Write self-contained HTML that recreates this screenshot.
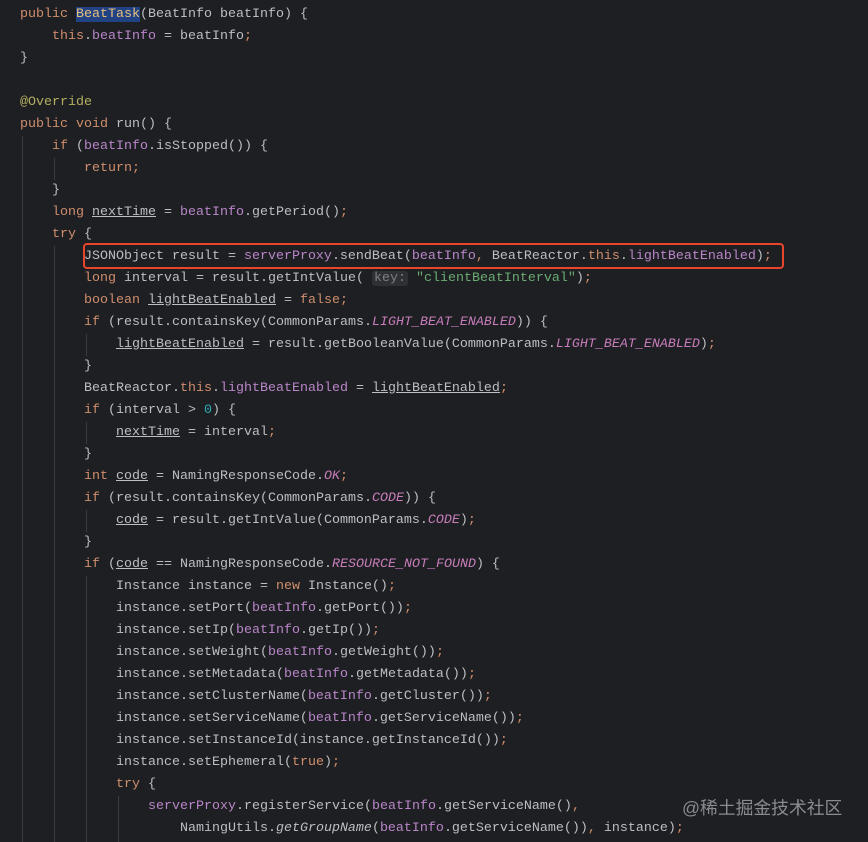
<!DOCTYPE html><html><head><meta charset="utf-8"><style>
body{margin:0;background:#1e1f22;width:868px;height:842px;overflow:hidden;position:relative}
pre{margin:0;position:absolute;left:20px;top:4px;font:13.33px/22px "Liberation Mono","DejaVu Sans Mono",monospace;color:#bcbec4;white-space:pre}
.k{color:#cf8e6d}.f{color:#b986c9}.s{color:#6aab73}.a{color:#b3ae60}.n{color:#2aacb8}.c{color:#c77dbb;font-style:italic}.i{font-style:italic}.u{text-decoration:underline}
.sel{background:#214283;color:#e8c07c}
.h{background:#2f3033;color:#7a7e85;border-radius:3px;padding:0 2px}
.box{position:absolute;left:83px;top:243px;width:697px;height:22px;border:2px solid #e8452c;border-radius:4px}
.g{position:absolute;width:1px;background:#393b40}
.wm{position:absolute;left:682px;top:794px;font:17.8px "Liberation Sans","Noto Sans CJK SC",sans-serif;color:#8a8b8e}
</style></head><body>
<div class="g" style="left:22px;top:136px;height:706px"></div>
<div class="g" style="left:54px;top:158px;height:22px"></div>
<div class="g" style="left:54px;top:246px;height:596px"></div>
<div class="g" style="left:86px;top:334px;height:22px"></div>
<div class="g" style="left:86px;top:422px;height:22px"></div>
<div class="g" style="left:86px;top:510px;height:22px"></div>
<div class="g" style="left:86px;top:576px;height:266px"></div>
<div class="g" style="left:118px;top:796px;height:46px"></div>
<pre><span class="k">public</span> <span class="sel">BeatTask</span>(BeatInfo beatInfo) {
    <span class="k">this</span>.<span class="f">beatInfo</span> = beatInfo<span class="k">;</span>
}

<span class="a">@Override</span>
<span class="k">public void</span> run() {
    <span class="k">if</span> (<span class="f">beatInfo</span>.isStopped()) {
        <span class="k">return;</span>
    }
    <span class="k">long</span> <span class="u">nextTime</span> = <span class="f">beatInfo</span>.getPeriod()<span class="k">;</span>
    <span class="k">try</span> {
        JSONObject result = <span class="f">serverProxy</span>.sendBeat(<span class="f">beatInfo</span><span class="k">,</span> BeatReactor.<span class="k">this</span>.<span class="f">lightBeatEnabled</span>)<span class="k">;</span>
        <span class="k">long</span> interval = result.getIntValue( <span class="h">key:</span> <span class="s">"clientBeatInterval"</span>)<span class="k">;</span>
        <span class="k">boolean</span> <span class="u">lightBeatEnabled</span> = <span class="k">false;</span>
        <span class="k">if</span> (result.containsKey(CommonParams.<span class="c">LIGHT_BEAT_ENABLED</span>)) {
            <span class="u">lightBeatEnabled</span> = result.getBooleanValue(CommonParams.<span class="c">LIGHT_BEAT_ENABLED</span>)<span class="k">;</span>
        }
        BeatReactor.<span class="k">this</span>.<span class="f">lightBeatEnabled</span> = <span class="u">lightBeatEnabled</span><span class="k">;</span>
        <span class="k">if</span> (interval &gt; <span class="n">0</span>) {
            <span class="u">nextTime</span> = interval<span class="k">;</span>
        }
        <span class="k">int</span> <span class="u">code</span> = NamingResponseCode.<span class="c">OK</span><span class="k">;</span>
        <span class="k">if</span> (result.containsKey(CommonParams.<span class="c">CODE</span>)) {
            <span class="u">code</span> = result.getIntValue(CommonParams.<span class="c">CODE</span>)<span class="k">;</span>
        }
        <span class="k">if</span> (<span class="u">code</span> == NamingResponseCode.<span class="c">RESOURCE_NOT_FOUND</span>) {
            Instance instance = <span class="k">new</span> Instance()<span class="k">;</span>
            instance.setPort(<span class="f">beatInfo</span>.getPort())<span class="k">;</span>
            instance.setIp(<span class="f">beatInfo</span>.getIp())<span class="k">;</span>
            instance.setWeight(<span class="f">beatInfo</span>.getWeight())<span class="k">;</span>
            instance.setMetadata(<span class="f">beatInfo</span>.getMetadata())<span class="k">;</span>
            instance.setClusterName(<span class="f">beatInfo</span>.getCluster())<span class="k">;</span>
            instance.setServiceName(<span class="f">beatInfo</span>.getServiceName())<span class="k">;</span>
            instance.setInstanceId(instance.getInstanceId())<span class="k">;</span>
            instance.setEphemeral(<span class="k">true</span>)<span class="k">;</span>
            <span class="k">try</span> {
                <span class="f">serverProxy</span>.registerService(<span class="f">beatInfo</span>.getServiceName()<span class="k">,</span>
                    NamingUtils.<span class="i">getGroupName</span>(<span class="f">beatInfo</span>.getServiceName())<span class="k">,</span> instance)<span class="k">;</span>
</pre>
<div class="box"></div>
<div class="wm">@稀土掘金技术社区</div>
</body></html>
